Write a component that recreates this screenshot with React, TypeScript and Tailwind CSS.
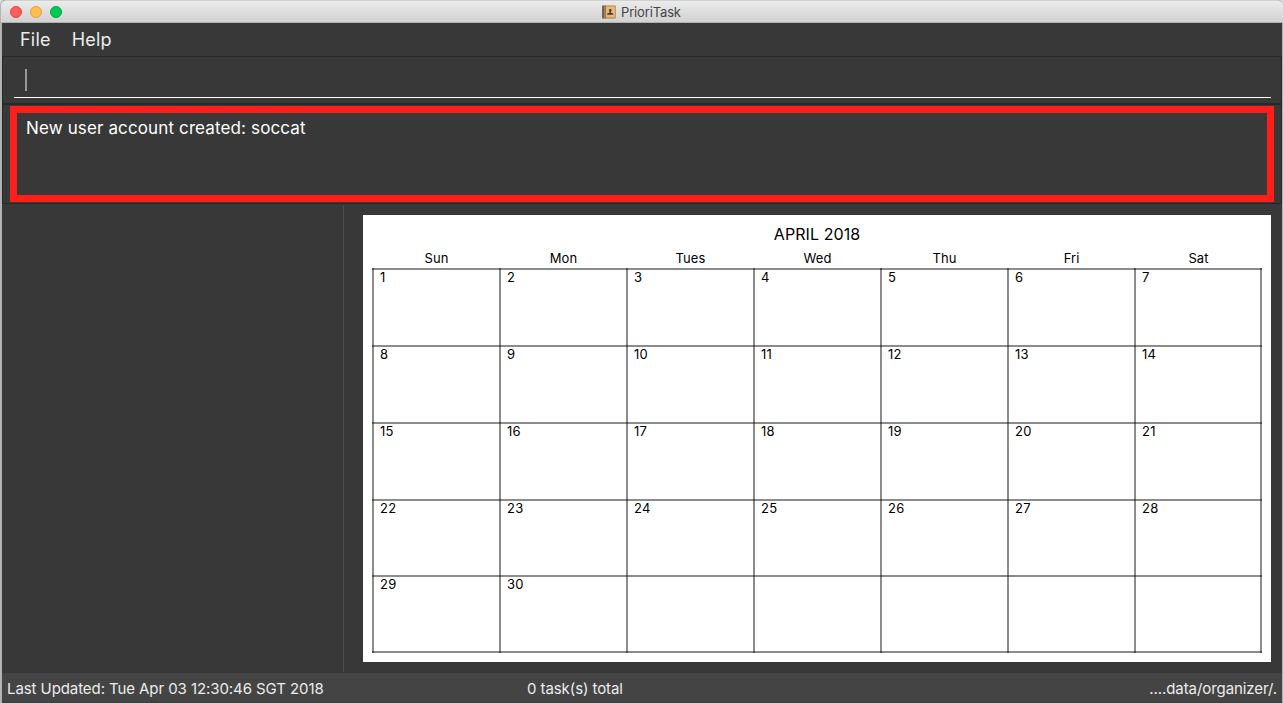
const WEEKDAYS = ["Sun", "Mon", "Tues", "Wed", "Thu", "Fri", "Sat"];
const CELLS = Array.from({ length: 35 }, (_, i) => (i < 30 ? String(i + 1) : ""));

const LINES = {
  inner: "shadow-[inset_2px_0_0_#00000073,inset_0_2px_0_#00000073]",
  right: "shadow-[inset_2px_0_0_#00000073,inset_0_2px_0_#00000073,inset_-2px_0_0_#00000073]",
  bottom: "shadow-[inset_2px_0_0_#00000073,inset_0_2px_0_#00000073,inset_0_-2px_0_#00000073]",
  corner:
    "shadow-[inset_2px_0_0_#00000073,inset_0_2px_0_#00000073,inset_-2px_0_0_#00000073,inset_0_-2px_0_#00000073]",
};

function cellLines(index: number) {
  const lastCol = index % 7 === 6;
  const lastRow = index >= 28;
  if (lastCol && lastRow) return LINES.corner;
  if (lastCol) return LINES.right;
  if (lastRow) return LINES.bottom;
  return LINES.inner;
}

function AddressBookIcon() {
  return (
    <svg width="14" height="14" viewBox="0 0 14 14">
      <rect x="0.5" y="0.5" width="13.200" height="13" rx="0.8" fill="#a97b48" />
      <rect x="3.500" y="1.300" width="9.500" height="11.200" fill="#e8b676" />
      <rect x="0.300" y="0.5" width="1.500" height="13" rx="0.5" fill="#57453c" />
      <rect x="1.800" y="0.5" width="1" height="13" fill="#a8988a" />
      <rect x="2.800" y="0.5" width="0.800" height="13" fill="#80603c" />
      <ellipse cx="8.200" cy="5.300" rx="1.200" ry="1.600" fill="#463a31" />
      <path d="M7.600 6h1.200v1.700l2.400.9v1.200H5.200V8.600l2.400-.9z" fill="#463a31" />
    </svg>
  );
}

function TitleBar() {
  return (
    <header className="-mx-px flex h-[23px] shrink-0 items-center rounded-t-[5px] border-t border-b border-t-[#d0d0d0] border-b-[#b0b0b0] bg-linear-to-b from-[#ebebeb] to-[#d2d2d2] pl-[9px]">
      <div className="flex w-[592px] gap-2 pt-px">
        <span className="size-3 rounded-full border border-[#e2443f] bg-[#ff5f5b]" />
        <span className="size-3 rounded-full border border-[#e09f3a] bg-[#ffbe4f]" />
        <span className="size-3 rounded-full border border-[#00a73c] bg-[#00ca56]" />
      </div>
      <div className="flex items-center gap-[5px] pt-px text-[13px] leading-none text-[#444]">
        <AddressBookIcon />
        <span className="tracking-[-0.15px]">PrioriTask</span>
      </div>
    </header>
  );
}

function Calendar() {
  return (
    <section className="mt-[10px] ml-[19px] h-[447px] w-[908px] bg-white pl-[9px] text-black">
      <h1 className="h-[34px] w-[890px] pt-[9px] text-center text-base leading-[21px] tracking-[0.08px]">
        APRIL 2018
      </h1>
      <div className="grid h-[19px] grid-cols-[repeat(6,127px)_127px] pl-px text-center text-[13px] leading-[19px] tracking-[0.05px]">
        {WEEKDAYS.map((day) => (
          <span key={day}>{day}</span>
        ))}
      </div>
      <div className="grid grid-cols-[repeat(6,127px)_128px] grid-rows-[77px_77px_77px_76px_78px] text-[13px] leading-[19px] tracking-[0.25px]">
        {CELLS.map((label, i) => (
          <div key={i} className={"pl-2 " + cellLines(i)}>
            {label}
          </div>
        ))}
      </div>
    </section>
  );
}

export default function App() {
  return (
    <div className="h-[703px] w-[1283px] overflow-hidden bg-[#dedede] font-['Inter','Liberation_Sans',sans-serif]">
      <div className="flex h-full flex-col rounded-t-[5px] border-r border-l-2 border-[#b3b3b3] bg-[#383838]">
        <TitleBar />
        <nav className="flex h-[33px] shrink-0 gap-[21px] pl-[18px] text-[18px] leading-[33px] tracking-[0.22px] text-[#ececec]">
          <span>File</span>
          <span>Help</span>
        </nav>
        <div className="h-[48px] shrink-0 border border-[#282828] px-[11px] pr-[10px]">
          <div className="flex h-[41px] items-start border-b border-white pt-[12px] pl-[11px]">
            <span className="h-[22px] w-[2px] bg-[#999]" />
          </div>
        </div>
        <div className="h-[100px] shrink-0 border border-[#282828] pt-px pr-[7px] pl-[7px]">
          <div className="h-[96px] border-[7px] border-[#ff1f1a] pt-[4px] pl-[9px] text-[17px] leading-[22px] tracking-[0.13px] text-white">
            New user account created: soccat
          </div>
        </div>
        <main className="flex h-[469px] shrink-0 pt-px">
          <aside className="mb-px w-[342px] border-r border-[#4d4d4d]" />
          <Calendar />
        </main>
        <footer className="flex h-[30px] shrink-0 border-b border-[#3c3c3c] bg-[#444] pl-[5px] text-[15px] leading-[31px] tracking-[-0.08px] text-[#ececec]">
          <span className="w-[520px]">Last Updated: Tue Apr 03 12:30:46 SGT 2018</span>
          <span>0 task(s) total</span>
          <span className="ml-auto pr-[5px]">....data/organizer/.</span>
        </footer>
      </div>
    </div>
  );
}
